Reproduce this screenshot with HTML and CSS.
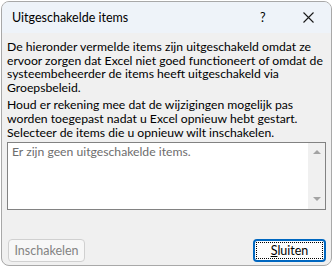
FILE: index.html
```html
<!DOCTYPE html>
<html>
<head>
    <meta charset="UTF-8">
    <title>Uitgeschakelde items</title>
    <link rel="stylesheet" href="styles.css">
</head>
<body>
<div class="window">
    <div class="titlebar">
        <span class="title">Uitgeschakelde items</span>
        <span class="help">?</span>
        <span class="close">
            <svg width="11" height="11" viewBox="0 0 11 11"><path d="M0.5 0.5 L10.5 10.5 M10.5 0.5 L0.5 10.5" stroke="#1a1a1a" stroke-width="1.1" fill="none"/></svg>
        </span>
    </div>
    <div class="content">
        <p class="text">De hieronder vermelde items zijn uitgeschakeld omdat ze ervoor zorgen dat Excel niet goed functioneert of omdat de systeembeheerder de items heeft uitgeschakeld via Groepsbeleid.</p>
        <p class="text second">Houd er rekening mee dat de wijzigingen mogelijk pas worden toegepast nadat u Excel opnieuw hebt gestart.</p>
        <p class="text third">Selecteer de items die u opnieuw wilt inschakelen.</p>
        <div class="listbox">
            <div class="empty">Er zijn geen uitgeschakelde items.</div>
            <div class="scroll">
                <span class="arrow up"></span>
                <span class="arrow down"></span>
            </div>
        </div>
        <div class="buttons">
            <button class="btn disabled" disabled>Inschakelen</button>
            <button class="btn primary"><span class="focus"><u>S</u>luiten</span></button>
        </div>
    </div>
</div>
</body>
</html>
```

FILE: styles.css
```css
body {
    margin: 0;
    background: #ffffff;
    font-family: Lato, "Noto Sans", sans-serif;
    font-size: 12.2px;
    color: #000;
}

.window {
    width: 329px;
    height: 263px;
    margin: 1px 0 0 1px;
    border: 1px solid #a8a8a8;
    border-radius: 8px;
    background: #f0f0f0;
    overflow: hidden;
    display: flex;
    flex-direction: column;
}

.titlebar {
    height: 31px;
    background: #eef3f9;
    display: flex;
    align-items: center;
    padding-left: 10px;
    font-size: 12.5px;
}

.title {
    flex: 1;
}

.help {
    width: 14px;
    margin-right: 29px;
}

.close {
    display: flex;
    margin-right: 17px;
}

.content {
    flex: 1;
    padding: 7px 5px 0 5px;
    display: flex;
    flex-direction: column;
}

.text {
    margin: 0;
    line-height: 13.5px;
}

.second {
    margin-top: 4px;
}

.third {
    margin-top: 1px;
}

.listbox {
    margin-top: 2px;
    height: 66px;
    border: 1px solid #828282;
    background: #fff;
    display: flex;
}

.empty {
    flex: 1;
    color: #6d6d6d;
    padding: 1px 4px;
}

.scroll {
    width: 17px;
    background: #f0f0f0;
    display: flex;
    flex-direction: column;
    justify-content: space-between;
    align-items: center;
    padding: 7px 0 8px 0;
}

.arrow {
    width: 0;
    height: 0;
    border-left: 4px solid transparent;
    border-right: 4px solid transparent;
}

.up {
    border-bottom: 4px solid #a3a3a3;
}

.down {
    border-top: 4px solid #a3a3a3;
}

.buttons {
    margin-top: auto;
    margin-bottom: 3px;
    display: flex;
    justify-content: space-between;
    padding-left: 1px;
}

.btn {
    height: 23px;
    font-family: inherit;
    font-size: 12.5px;
    border-radius: 4px;
    padding: 0;
}

.disabled {
    width: 77px;
    background: #f7f7f7;
    border: 1px solid #d0d0d0;
    color: #838383;
}

.primary {
    width: 73px;
    background: #fdfdfd;
    border: 2px solid #0067c0;
    color: #000;
    display: flex;
    padding: 1px;
}

.focus {
    flex: 1;
    border: 1px dotted #000;
    display: flex;
    align-items: center;
    justify-content: center;
}
```
